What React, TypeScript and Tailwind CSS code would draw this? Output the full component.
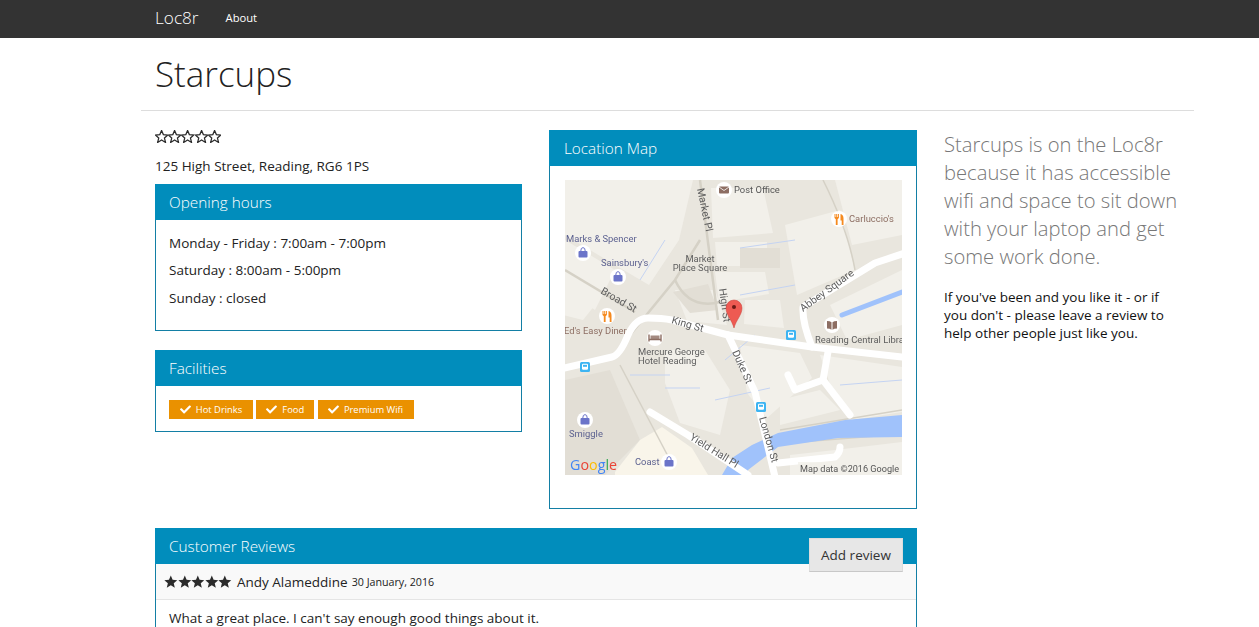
import React from 'react';
import { FaCheck } from 'react-icons/fa';

const STAR = '12,0.8 15.2,8.4 23.4,9.1 17.2,14.5 19.1,22.6 12,18.3 4.9,22.6 6.8,14.5 0.6,9.1 8.8,8.4';

const Stars: React.FC<{ filled?: boolean }> = ({ filled }) => (
  <span className="flex">
    {[0, 1, 2, 3, 4].map((i) => (
      <svg key={i} viewBox="0 0 24 24" className={filled ? 'w-[13.6px] h-[13.6px]' : 'w-[13.2px] h-[13.2px]'}>
        <polygon
          points={STAR}
          fill={filled ? '#2b2b2b' : 'none'}
          stroke={filled ? 'none' : '#2b2b2b'}
          strokeWidth={2.3}
        />
      </svg>
    ))}
  </span>
);

const Panel: React.FC<{ title: string; className?: string; children: React.ReactNode }> = ({ title, className, children }) => (
  <div className={`border border-[#137fa5] ${className ?? ''}`}>
    <div className="h-[36px] -mx-px -mt-px bg-[#018dbc] pl-[14px] pt-[1px] flex items-center text-white text-[15.3px] font-light leading-none">
      {title}
    </div>
    {children}
  </div>
);

const Tag: React.FC<{ label: string; w: string }> = ({ label, w }) => (
  <span className={`${w} h-[19px] bg-[#ea9100] text-white text-[9.4px] flex items-center justify-center gap-[5px]`}>
    <FaCheck className="w-[11px] h-[11px]" />
    {label}
  </span>
);

const Poi: React.FC<{ x: number; y: number; c: string; kind: 'shop' | 'food' | 'bus' | 'post' | 'book' | 'bed' }> = ({ x, y, c, kind }) => {
  if (kind === 'bus') {
    return (
      <g>
        <rect x={x - 5} y={y - 5} width="10" height="10" rx="1.5" fill="#3db4f2" />
        <rect x={x - 3} y={y - 3.2} width="6" height="6" rx="1.2" fill="#fff" />
        <rect x={x - 2} y={y - 2.2} width="4" height="2" fill="#3db4f2" />
      </g>
    );
  }
  return (
    <g>
      <circle cx={x} cy={y} r="8" fill="#fff" />
      {kind === 'shop' && (
        <g>
          <rect x={x - 4.5} y={y - 2} width="9" height="6.5" rx="1" fill={c} />
          <path d={`M${x - 2.2} ${y - 2} a2.2 3.4 0 0 1 4.4 0`} stroke={c} fill="none" strokeWidth="1" />
        </g>
      )}
      {kind === 'food' && (
        <g fill={c}>
          <path d={`M${x - 4.5} ${y - 5} h1 v3 h0.7 v-3 h1 v3 h0.7 v-3 h1 v4 l-1.3 1.2 v5.8 h-1.8 v-5.8 l-1.3 -1.2z`} />
          <path d={`M${x + 1.5} ${y - 5} q3 0.5 3 4.5 v6.5 h-1.8 v-4.5 h-1.2z`} />
        </g>
      )}
      {kind === 'post' && (
        <g>
          <rect x={x - 5} y={y - 3.5} width="10" height="7" rx="1" fill={c} />
          <path d={`M${x - 5} ${y - 3} l5 3.5 l5 -3.5`} stroke="#fff" strokeWidth="0.8" fill="none" />
        </g>
      )}
      {kind === 'book' && <path d={`M${x - 5} ${y - 4} q3 0 4.5 1.2 v7.5 q-1.5 -1.2 -4.5 -1.2z M${x + 5} ${y - 4} q-3 0 -4.5 1.2 v7.5 q1.5 -1.2 4.5 -1.2z`} fill={c} />}
      {kind === 'bed' && (
        <g>
          <path d={`M${x - 6} ${y - 3.5} v7 M${x + 6} ${y - 3.5} v7 M${x - 6} ${y + 1.5} h12`} stroke={c} strokeWidth="1.4" fill="none" />
          <rect x={x - 4.5} y={y - 2.5} width="9" height="3.5" fill={c} opacity="0.8" />
        </g>
      )}
    </g>
  );
};

// static map, hand drawn at the size of the picture
const MapPicture = () => {
  const label = { fontFamily: 'Roboto, sans-serif', fontSize: 9.4 };
  const road = { fontFamily: 'Roboto, sans-serif', fontSize: 10.4 };
  return (
    <svg viewBox="0 0 337 295" className="w-[337px] h-[295px] block bg-[#e9e6de] blur-[0.3px]">
      <g fill="#f2f0ea">
        <path d="M0 0h128l-14 60-30 45-34-20-50-30z" />
        <path d="M146 8h52l10 45-60 5z" />
        <path d="M150 62h52v24h-50z" />
        <path d="M150 92h50l4 22-50 8z" />
        <path d="M220 45l55-15 15 60-58 25z" />
        <path d="M270 0h67v55l-50 10z" />
        <path d="M110 110h40l12 35-40-4z" />
        <path d="M10 95l28 20-20 25-20-5v-25z" />
        <path d="M180 120h35l4 28-40-4z" />
        <path d="M265 125l72-35v55l-55 15z" />
        <path d="M255 175l82 12v45l-50 8-20-30z" />
        <path d="M175 165l60 8 12 25-45 40-20-25z" />
        <path d="M100 170h40l25 40-10 45-40-12-15-40z" />
        <path d="M215 220l40-10 20 20-60 15z" />
        <path d="M0 60l50 30-20 40-30-20z" />
        <path d="M0 225l18 12-6 40-12 10z" opacity="0.7" />
        <path d="M225 275l45-5 67-8v33h-112z" />
      </g>
      <g fill="#e2ded5">
        <path d="M0 200l45-10 30 70-35 35h-40z" />
        <path d="M175 68h40v20h-40z" />
        <path d="M108 112l35-8 10 26-28 3z" />
      </g>
      <path d="M97 247l-22 13-25 32v3h93l-16-27z" fill="#f9f5ea" />
      <g stroke="#d5d1c6" fill="none" strokeWidth="2.5">
        <path d="M0 90l70 42" />
        <path d="M135 0l18 140" />
        <path d="M135 60l-25 40-45 55" />
        <path d="M110 100q14 30 45 22" />
        <path d="M258 0q25 50 32 90" strokeWidth="1.5" />
        <path d="M55 185l50 95" strokeWidth="1.5" />
        <path d="M215 250l122-20" strokeWidth="1.5" />
        <path d="M235 262l102-8" strokeWidth="1.5" />
      </g>
      <g stroke="#c4d3f2" fill="none" strokeWidth="1">
        <path d="M175 68l55-8" />
        <path d="M175 115l55-10" />
        <path d="M100 60L75 100" />
        <path d="M0 190l45-12" />
        <path d="M65 195h40" />
        <path d="M100 208h35" />
        <path d="M150 220l55-12" />
        <path d="M275 205l62-5" />
        <path d="M160 180l30-25" />
      </g>
      <path d="M337 235l-57 5-67 13-26 12-20 13-10 17h26v-5l30-23 60-9 64-1z" fill="#a0c2fb" />
      <path d="M277 135l60-23" stroke="#a0c2fb" strokeWidth="5" fill="none" strokeLinecap="round" />
      <g stroke="#fff" fill="none" strokeWidth="7" strokeLinecap="round" strokeLinejoin="round">
        <path d="M-5 189l52-12q8-2 16-22q8-17 20-17q14 0 24 2l56 15 84 12 90 10" />
        <path d="M163 155l27 57 20 85" />
        <path d="M247 167q-10-25-9-40l72-44 30-10" />
        <path d="M263 172l-5 28-28 10-7-15" />
        <path d="M258 200l27 35" />
        <path d="M85 232l38 23 60 40" />
        <path d="M213 283l57-6q5-4 5-10" />
      </g>
      <g fill="#5e5e5e" style={label}>
        <text x="169" y="13" fill="#555">Post Office</text>
        <text x="135" y="82" textAnchor="middle">Market</text>
        <text x="135" y="91" textAnchor="middle">Place Square</text>
        <text x="250" y="163">Reading Central Libra</text>
        <text x="73" y="175">Mercure George</text>
        <text x="73" y="184">Hotel Reading</text>
        <text x="284" y="42" fill="#8d6e63">Carluccio's</text>
        <text x="-1" y="154" fill="#8d6e63">Ed's Easy Diner</text>
        <text x="1" y="62" fill="#5c6190">Marks &amp; Spencer</text>
        <text x="36" y="86" fill="#5c6190">Sainsbury's</text>
        <text x="4" y="257" fill="#5c6190">Smiggle</text>
        <text x="70" y="285" fill="#5c6190">Coast</text>
      </g>
      <g fill="#5e5e5e" style={road}>
        <text transform="translate(132 9) rotate(78)">Market Pl</text>
        <text transform="translate(154 109) rotate(82)">High St</text>
        <text transform="translate(35 113) rotate(30)">Broad St</text>
        <text transform="translate(106 143) rotate(16)">King St</text>
        <text transform="translate(238 132) rotate(-36)">Abbey Square</text>
        <text transform="translate(167 172) rotate(66)">Duke St</text>
        <text transform="translate(194 238) rotate(74)">London St</text>
        <text transform="translate(124 259) rotate(32)">Yield Hall Pl</text>
      </g>
      <Poi x={159} y={10} c="#8d6e63" kind="post" />
      <Poi x={274} y={39} c="#f58a1f" kind="food" />
      <Poi x={18} y={73} c="#6b74c9" kind="shop" />
      <Poi x={53} y={97} c="#6b74c9" kind="shop" />
      <Poi x={42} y={136} c="#f58a1f" kind="food" />
      <Poi x={267} y={145} c="#8d6e63" kind="book" />
      <Poi x={90} y={158} c="#8d6e63" kind="bed" />
      <Poi x={20} y={187} c="#3db4f2" kind="bus" />
      <Poi x={226} y={155} c="#3db4f2" kind="bus" />
      <Poi x={196} y={227} c="#3db4f2" kind="bus" />
      <Poi x={20} y={240} c="#6b74c9" kind="shop" />
      <Poi x={104} y={282} c="#6b74c9" kind="shop" />
      <path d="M169 148c-2-8-8-13-8-20a8 8 0 0 1 16 0c0 7-6 12-8 20z" fill="#ee5a52" stroke="#c9403a" strokeWidth="0.5" />
      <circle cx="169" cy="127" r="2" fill="#6b1a16" />
      <rect x="233" y="282" width="104" height="13" fill="#f2f0ea" opacity="0.75" />
      <text x="235" y="292" fill="#555" style={{ fontFamily: 'Roboto, sans-serif', fontSize: 9.1 }}>Map data ©2016 Google</text>
      <text x="5" y="290" style={{ fontFamily: '"Open Sans", sans-serif', fontSize: 14.3 }}>
        <tspan fill="#4285f4">G</tspan>
        <tspan fill="#ea4335">o</tspan>
        <tspan fill="#fbbc05">o</tspan>
        <tspan fill="#4285f4">g</tspan>
        <tspan fill="#34a853">l</tspan>
        <tspan fill="#ea4335">e</tspan>
      </text>
    </svg>
  );
};

export default function App() {
  return (
    <div className="h-screen overflow-hidden bg-white text-[#222] text-[13.5px] leading-[18px] font-['Open_Sans',sans-serif]">
      <nav className="h-[38px] bg-[#333] text-white flex items-center pl-[155px] pb-[2px]">
        <span className="text-[17.2px] font-light">Loc8r</span>
        <span className="ml-[27px] text-[11.2px]">About</span>
      </nav>

      <main className="ml-[141px] w-[1053px]">
        <header className="h-[73px] border-b border-[#ddd] pl-[14px] pt-[13px]">
          <h1 className="text-[35px] leading-[46px] font-light text-[#222]">Starcups</h1>
        </header>

        <div className="flex pl-[14px] mt-[19px] gap-[27px]">
          <div className="w-[367px] shrink-0">
            <div className="h-[14px] flex"><Stars /></div>
            <p className="mt-[13px] h-[27px]">125 High Street, Reading, RG6 1PS</p>
            <Panel title="Opening hours" className="h-[147px]">
              <div className="px-[13px] pt-[14px]">
                <p className="mb-[9.25px]">Monday - Friday : 7:00am - 7:00pm</p>
                <p className="mb-[9.25px]">Saturday : 8:00am - 5:00pm</p>
                <p>Sunday : closed</p>
              </div>
            </Panel>
            <Panel title="Facilities" className="h-[82px] mt-[19px]">
              <div className="pl-[13px] pt-[14px] flex gap-[3.25px]">
                <Tag label="Hot Drinks" w="w-[84px]" />
                <Tag label="Food" w="w-[58px]" />
                <Tag label="Premium Wifi" w="w-[96px]" />
              </div>
            </Panel>
          </div>

          <Panel title="Location Map" className="w-[368px] h-[379px] shrink-0 [&>div:first-child]:pl-[15px]">
            <div className="pl-[15px] pt-[14px]">
              <MapPicture />
            </div>
          </Panel>

          <aside className="w-[238px]">
            <p className="text-[20.2px] leading-[28px] font-light text-[#777]">
              Starcups is on the Loc8r because it has accessible wifi and space to sit down with your laptop and get some work done.
            </p>
            <p className="mt-[18px] w-[228px] text-[#111]">
              If you've been and you like it - or if you don't - please leave a review to help other people just like you.
            </p>
          </aside>
        </div>

        <div className="ml-[14px] w-[762px] mt-[19px] border border-[#137fa5]">
          <div className="h-[36px] -mx-px -mt-px bg-[#018dbc] pl-[14px] pr-[14px] flex items-start justify-between text-white">
            <span className="text-[15.3px] font-light leading-[36px]">Customer Reviews</span>
            <button className="mt-[10px] w-[94px] h-[34px] bg-[#e7e7e7] border border-[#dcdcdc] border-b-[#c8c8c8] text-[#333] text-[13.5px] relative">
              Add review
            </button>
          </div>
          <div className="h-[36px] bg-[#f9f9f9] border-b border-[#e5e5e5] pl-[8px] flex items-center">
            <Stars filled />
            <span className="ml-[5px]">Andy Alameddine</span>
            <span className="ml-[4px] text-[10.7px]">30 January, 2016</span>
          </div>
          <p className="pl-[13px] pt-[9px] h-[60px]">What a great place. I can't say enough good things about it.</p>
        </div>
      </main>
    </div>
  );
}
